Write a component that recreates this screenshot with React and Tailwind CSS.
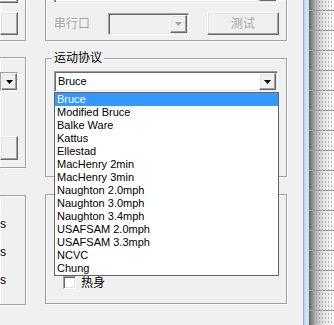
const raised =
  "border border-t-white border-l-white border-r-[#696969] border-b-[#696969] shadow-[inset_-1px_-1px_0_#a0a0a0,inset_1px_1px_0_#e3e3e3]";
const sunken =
  "border border-t-[#a0a0a0] border-l-[#a0a0a0] border-r-white border-b-white shadow-[inset_1px_1px_0_#696969,inset_-1px_-1px_0_#e3e3e3]";
const etched = "border-[#a0a0a0] shadow-[inset_1px_1px_0_#fff,1px_1px_0_#fff]";

const protocols = [
  "Bruce",
  "Modified Bruce",
  "Balke Ware",
  "Kattus",
  "Ellestad",
  "MacHenry 2min",
  "MacHenry 3min",
  "Naughton 2.0mph",
  "Naughton 3.0mph",
  "Naughton 3.4mph",
  "USAFSAM 2.0mph",
  "USAFSAM 3.3mph",
  "NCVC",
  "Chung",
];

function Arrow({ disabled }) {
  return (
    <svg width="7" height="4" viewBox="0 0 7 4">
      <path d="M0 0h7L3.5 4z" fill={disabled ? "#a0a0a0" : "#000"} />
    </svg>
  );
}

function DropButton({ disabled, className = "" }) {
  return (
    <div className={`flex h-[17px] w-[17px] items-center justify-center bg-[#f0f0f0] ${raised} ${className}`}>
      <Arrow disabled={disabled} />
    </div>
  );
}

export default function App() {
  return (
    <div className="relative flex h-[325px] w-[334px] overflow-hidden bg-[#f0f0f0] font-['Liberation_Sans','Noto_Sans_CJK_SC',sans-serif] text-[11px] leading-none text-black">
      {/* left column, groups cut off by the left edge */}
      <div className="flex w-[26px] shrink-0 flex-col">
        <div className={`h-[41px] border-r border-b ${etched}`}>
          <div className="h-[3px] w-[18px] border-r border-b border-[#696969] shadow-[inset_-1px_-1px_0_#a0a0a0]" />
          <div className={`mt-[9px] h-[23px] w-[18px] ${raised}`} />
        </div>
        <div className={`mt-[16px] h-[111px] border-t border-r border-b ${etched}`}>
          <div className={`mt-[14px] flex h-[19px] w-[18px] items-center justify-end ${sunken}`}>
            <DropButton className="h-[15px] w-[15px]" />
          </div>
          <div className={`mt-[45px] h-[24px] w-[18px] ${raised}`} />
        </div>
        <div className={`mt-[27px] h-[110px] border-t border-r border-b ${etched}`}>
          <div className="flex flex-col gap-[16px] pt-[22px] text-[12px] leading-[12px]">
            <span>s</span>
            <span>s</span>
            <span>s</span>
          </div>
        </div>
      </div>

      {/* middle column */}
      <div className="ml-[19px] flex w-[242px] shrink-0 flex-col">
        <div className={`h-[41px] border-x border-b ${etched}`}>
          <div className={`-mt-[20px] ml-[8px] flex h-[23px] w-[224px] items-end justify-end pb-[1px] pr-[1px] ${sunken}`}>
            <DropButton disabled />
          </div>
          <div className="mt-[9px] flex items-center pl-[8px]">
            <span className="w-[54px] text-[12px] text-[#a0a0a0] [text-shadow:1px_1px_0_#fff]">串行口</span>
            <div className={`flex h-[22px] w-[81px] items-center justify-end pr-[1px] ${sunken}`}>
              <DropButton disabled className="h-[18px]" />
            </div>
            <div className={`ml-[18px] flex h-[23px] w-[72px] items-center justify-center text-[12px] text-[#a0a0a0] [text-shadow:1px_1px_0_#fff] ${raised}`}>
              测试
            </div>
          </div>
        </div>

        <div className={`relative mt-[17px] h-[119px] border border-[#a0a0a0] ${etched}`}>
          <span className="absolute -top-[7px] left-[6px] bg-[#f0f0f0] px-[2px] text-[12px] leading-[13px]">运动协议</span>
          <div className={`ml-[8px] mt-[12px] flex h-[21px] w-[224px] items-center justify-between bg-white pl-[3px] pr-[1px] ${sunken}`}>
            <span>Bruce</span>
            <DropButton />
          </div>
        </div>

        <div className={`mt-[17px] flex h-[110px] flex-col justify-end border ${etched}`}>
          <label className="mb-[14px] ml-[17px] flex items-center gap-[5px] text-[12px]">
            <span className={`h-[13px] w-[13px] bg-white ${sunken}`} />
            热身
          </label>
        </div>
      </div>

      {/* right edge: window frame over the designer surface */}
      <div className="ml-[16px] w-[6px] shrink-0 border-l border-[#8fb3d6] bg-[linear-gradient(to_right,#b5d0ec,#d6e6f6,#c4dbf1)]" />
      <div className="relative flex-1 bg-[linear-gradient(to_right,#5f5f5f,#b4b4b4_25%,#e6e6e6_60%,#fafafa)]">
        <div className="absolute inset-0 bg-[radial-gradient(#8c8c8c_0.6px,transparent_0.8px)] bg-[size:3px_4px] opacity-60" />
        <div className="absolute inset-0 flex flex-col pt-[10px]">
          {Array.from({ length: 16 }).map((_, i) => (
            <div key={i} className="h-[20px] shrink-0 border-t border-[#9c9c9c]" />
          ))}
        </div>
      </div>

      {/* open drop-down list of the protocol combo box */}
      <div className="absolute left-[54px] top-[92px] flex w-[225px] flex-col border border-[#646464] bg-white">
        {protocols.map((p, i) => (
          <div
            key={p}
            className={`flex h-[13px] items-center pl-[2px] ${i === 0 ? "bg-[#3399ff] text-white" : ""}`}
          >
            {p}
          </div>
        ))}
      </div>
    </div>
  );
}
